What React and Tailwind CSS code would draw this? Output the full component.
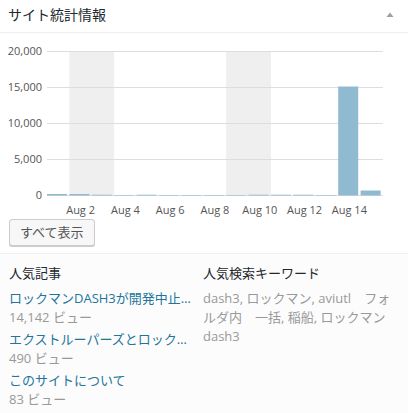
import React from "react";

const heights = [1.5, 1.5, 0.8, 0.5, 0.8, 0.5, 0.5, 0.5, 0.5, 0.8, 0.8, 0.8, 0.5, 109, 5];
const COL = 22.4;
const X0 = 47;
const BASE = 162;

function Chart() {
  const yLabels = [
    ["20,000", 18],
    ["15,000", 54],
    ["10,000", 90],
    ["5,000", 126],
    ["0", 162],
  ];
  return (
    <svg width="408" height="186" className="block" style={{ fontFamily: "'Open Sans', 'Noto Sans CJK JP', sans-serif" }}>
      <rect x={X0 + COL * 1} y={18} width={COL * 2} height={BASE - 18} fill="#efefef" />
      <rect x={X0 + COL * 8} y={18} width={COL * 2} height={BASE - 18} fill="#efefef" />
      {yLabels.map(([t, y]) => (
        <g key={t}>
          <line x1={X0} x2={383} y1={y + 0.5} y2={y + 0.5} stroke="#dddddd" strokeWidth="1" />
          <text x={42} y={y + 4} textAnchor="end" fontSize="11" fill="#555">
            {t}
          </text>
        </g>
      ))}
      {heights.map((h, i) => (
        <rect key={i} x={X0 + i * COL} y={BASE + 0.5 - h} width={20} height={h} fill="#8fbacf" />
      ))}
      {[1, 3, 5, 7, 9, 11, 13].map((i) => (
        <text key={i} x={X0 + i * COL + 11.2} y={181} textAnchor="middle" fontSize="11" fill="#555">
          {"Aug " + (i + 1)}
        </text>
      ))}
    </svg>
  );
}

export default function App() {
  return (
    <div className="w-[408px] h-[413px] overflow-hidden bg-white font-['Open_Sans','Noto_Sans_CJK_JP',sans-serif] text-[#23282d]">
      <div className="h-[33px] border-b border-[#eeeeee] flex items-center justify-between pl-2 pr-[14px]">
        <span className="text-[14px] leading-[20px] -mt-[2px]">サイト統計情報</span>
        <svg width="8" height="6" className="-mt-[3px]">
          <polygon points="0.5,5 4,0.5 7.5,5" fill="#a0a0a0" />
        </svg>
      </div>
      <Chart />
      <div className="px-[9px] pb-[7px]">
        <button className="h-[27px] px-[10px] rounded-[3px] border border-[#cccccc] bg-[#f7f7f7] text-[13px] leading-[25px] text-[#555] shadow-[0_1px_0_#cccccc]">
          すべて表示
        </button>
      </div>
      <div className="border-t border-[#eeeeee] bg-[#fcfcfc] flex pl-[9px] pt-[10px] h-[160px]">
        <div className="w-[194px] pr-2">
          <div className="text-[13px] leading-[18px] mb-[7px] text-[#23282d]">人気記事</div>
          <div className="mb-[3px]">
            <div className="text-[13px] leading-[19px] text-[#21759b] whitespace-nowrap">ロックマンDASH3が開発中止…</div>
            <div className="text-[13px] leading-[19px] text-[#999]">14,142 ビュー</div>
          </div>
          <div className="mb-[3px]">
            <div className="text-[13px] leading-[19px] text-[#21759b] whitespace-nowrap">エクストルーパーズとロック…</div>
            <div className="text-[13px] leading-[19px] text-[#999]">490 ビュー</div>
          </div>
          <div>
            <div className="text-[13px] leading-[19px] text-[#21759b] whitespace-nowrap">このサイトについて</div>
            <div className="text-[13px] leading-[19px] text-[#999]">83 ビュー</div>
          </div>
        </div>
        <div className="w-[197px]">
          <div className="text-[13px] leading-[18px] mb-[7px] text-[#23282d]">人気検索キーワード</div>
          <p className="text-[13px] leading-[19px] text-[#999]">
            dash3, ロックマン, aviutl　フォルダ内　一括, 稲船, ロックマン dash3
          </p>
        </div>
      </div>
    </div>
  );
}
